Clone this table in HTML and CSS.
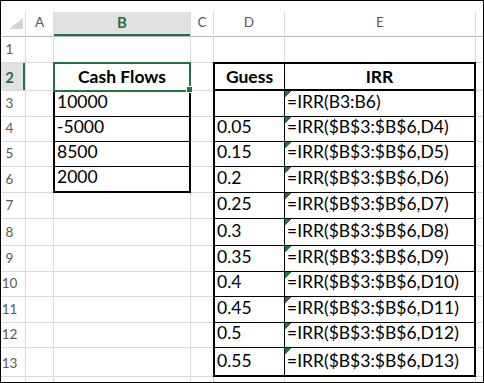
FILE: index.html
```html
<!DOCTYPE html>
<html lang="en">
<head>
<meta charset="utf-8">
<title>IRR guesses</title>
<link rel="stylesheet" href="styles.css">
</head>
<body>
<div class="frame">
  <div class="strip"></div>
  <div class="sheet">
    <!-- column headers -->
    <div class="corner"><span class="tri"></span></div>
    <div class="ch">A</div>
    <div class="ch sel">B</div>
    <div class="ch">C</div>
    <div class="ch">D</div>
    <div class="ch">E</div>
    <div class="ch"></div>
    <!-- row 1 -->
    <div class="rh">1</div><div class="c"></div><div class="c"></div><div class="c"></div><div class="c"></div><div class="c"></div><div class="c"></div>
    <!-- row 2 -->
    <div class="rh sel">2</div><div class="c"></div><div class="c"></div><div class="c"></div>
    <!-- rows 3-6 -->
    <div class="rh">3</div><div class="c"></div><div class="c"></div><div class="c"></div>
    <div class="rh">4</div><div class="c"></div><div class="c"></div><div class="c"></div>
    <div class="rh">5</div><div class="c"></div><div class="c"></div><div class="c"></div>
    <div class="rh">6</div><div class="c"></div><div class="c"></div><div class="c"></div>
    <!-- rows 7-13 -->
    <div class="rh">7</div><div class="c"></div><div class="c"></div><div class="c"></div><div class="c"></div>
    <div class="rh">8</div><div class="c"></div><div class="c"></div><div class="c"></div><div class="c"></div>
    <div class="rh">9</div><div class="c"></div><div class="c"></div><div class="c"></div><div class="c"></div>
    <div class="rh">10</div><div class="c"></div><div class="c"></div><div class="c"></div><div class="c"></div>
    <div class="rh">11</div><div class="c"></div><div class="c"></div><div class="c"></div><div class="c"></div>
    <div class="rh">12</div><div class="c"></div><div class="c"></div><div class="c"></div><div class="c"></div>
    <div class="rh">13</div><div class="c"></div><div class="c"></div><div class="c"></div><div class="c"></div>
    <!-- row 14 (cut off) -->
    <div class="rh"></div><div class="c"></div><div class="c"></div><div class="c"></div><div class="c"></div><div class="c"></div><div class="c"></div>

    <!-- Cash Flows table B2:B6 -->
    <div class="tbl tbl-b">
      <div class="tc hdr selected">Cash Flows</div>
      <div class="tc">10000</div>
      <div class="tc">-5000</div>
      <div class="tc">8500</div>
      <div class="tc">2000</div>
    </div>

    <!-- Guess / IRR table D2:E13 -->
    <div class="tbl tbl-d">
      <div class="tc hdr">Guess</div><div class="tc hdr">IRR</div>
      <div class="tc"></div><div class="tc err">=IRR(B3:B6)</div>
      <div class="tc">0.05</div><div class="tc err">=IRR($B$3:$B$6,D4)</div>
      <div class="tc">0.15</div><div class="tc err">=IRR($B$3:$B$6,D5)</div>
      <div class="tc">0.2</div><div class="tc err">=IRR($B$3:$B$6,D6)</div>
      <div class="tc">0.25</div><div class="tc err">=IRR($B$3:$B$6,D7)</div>
      <div class="tc">0.3</div><div class="tc err">=IRR($B$3:$B$6,D8)</div>
      <div class="tc">0.35</div><div class="tc err">=IRR($B$3:$B$6,D9)</div>
      <div class="tc">0.4</div><div class="tc err">=IRR($B$3:$B$6,D10)</div>
      <div class="tc">0.45</div><div class="tc err">=IRR($B$3:$B$6,D11)</div>
      <div class="tc">0.5</div><div class="tc err">=IRR($B$3:$B$6,D12)</div>
      <div class="tc">0.55</div><div class="tc err">=IRR($B$3:$B$6,D13)</div>
    </div>
  </div>
</div>
</body>
</html>
```

FILE: styles.css
```css
html, body {
  margin: 0;
  padding: 0;
  background: #fff;
}

.frame {
  width: 484px;
  height: 383px;
  box-sizing: border-box;
  border: 1px solid #000;
  background: #fff;
  overflow: hidden;
  font-family: Lato, "Liberation Sans", sans-serif;
  color: #000;
}

.strip {
  height: 11px;
  background: #fff;
}

.sheet {
  display: grid;
  grid-template-columns: 24px 27px 136px 22px 70px 190px 1fr;
  grid-template-rows: 24px 25px 27px 25px 24px 24px 25px 25px 26px 25px 24px 25px 24px 28px 5px;
  gap: 1px;
  background: #dadada;
}

.c {
  background: #fff;
}

/* column headers */
.corner {
  background: #fff;
  display: flex;
  justify-content: flex-end;
  align-items: flex-end;
  padding: 0 2px 7px 0;
  box-shadow: 0 1px 0 #b4b4b4;
}

.tri {
  width: 14px;
  height: 11px;
  background: linear-gradient(to bottom right, transparent 50%, #d4d4d4 50%);
}

.ch {
  background: #fff;
  color: #5a5a5a;
  font-size: 13.5px;
  line-height: 13px;
  display: flex;
  justify-content: center;
  align-items: flex-end;
  padding-bottom: 7px;
  box-sizing: border-box;
  box-shadow: 0 1px 0 #b4b4b4;
}

.ch.sel {
  background: #e1e1e1;
  color: #217346;
  font-weight: bold;
  font-size: 15px;
  box-shadow: inset 0 -2px 0 #217346, 0 1px 0 #b4b4b4;
}

/* row headers */
.rh {
  background: #fff;
  color: #5a5a5a;
  font-size: 13.5px;
  line-height: 13px;
  display: flex;
  justify-content: center;
  align-items: flex-end;
  padding: 0 7px 6px 0;
  box-sizing: border-box;
}

.rh.sel {
  background: #e1e1e1;
  color: #217346;
  font-weight: bold;
  font-size: 15px;
  box-shadow: inset -2px 0 0 #217346;
}

/* bordered tables */
.tbl {
  display: grid;
  gap: 1px;
  background: #000;
  border: 2px solid #000;
  margin: -1px;
}

.tbl-b {
  grid-column: 3;
  grid-row: 3 / 8;
  grid-template-columns: 1fr;
  grid-template-rows: 26px 25px 24px 24px 24px;
}

.tbl-d {
  grid-column: 5 / 7;
  grid-row: 3 / 15;
  grid-template-columns: 69px 189px;
  grid-template-rows: 26px 25px 24px 24px 25px 25px 26px 25px 24px 25px 24px 27px;
}

.tc {
  background: #fff;
  font-size: 17.5px;
  line-height: 17px;
  display: flex;
  align-items: flex-end;
  padding: 0 0 6px 2px;
  box-sizing: border-box;
  white-space: nowrap;
}

.tc.hdr {
  font-weight: bold;
  justify-content: center;
  padding: 0 0 5px 0;
}

.tbl-d .tc.hdr {
  box-shadow: inset 0 -1px 0 #000;
}

.tc.err {
  background: linear-gradient(135deg, #1f7a3a 0, #1f7a3a 4.5px, #fff 4.5px);
}

.selected {
  position: relative;
  z-index: 2;
  outline: 2px solid #217346;
}

.selected::after {
  content: "";
  position: absolute;
  right: -4px;
  bottom: -3px;
  width: 5px;
  height: 5px;
  background: #217346;
  border: 1px solid #fff;
}
```
